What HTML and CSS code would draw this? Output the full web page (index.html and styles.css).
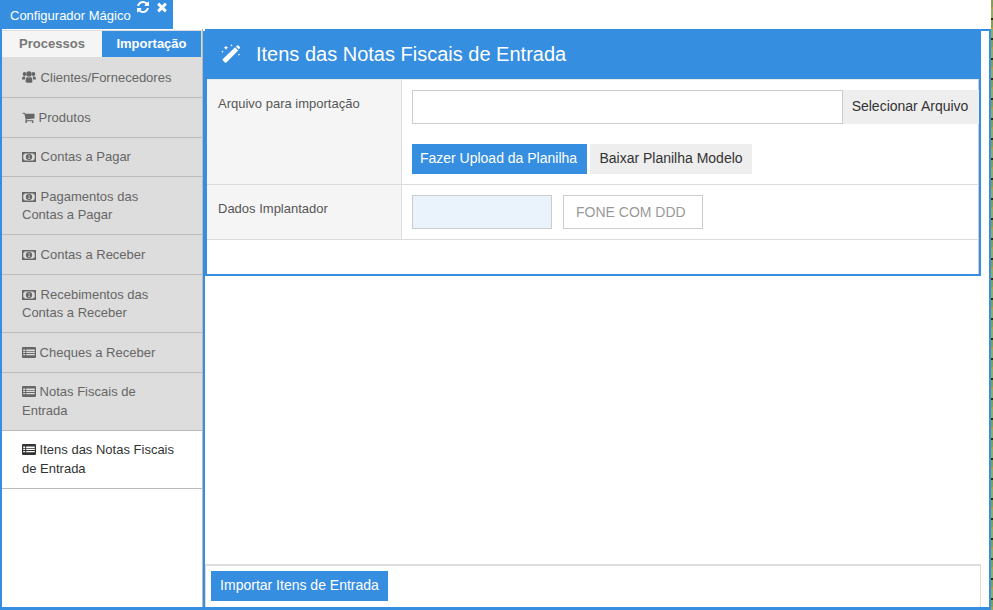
FILE: index.html
```html
<!DOCTYPE html>
<html lang="pt">
<head>
<meta charset="utf-8">
<title>Configurador Mágico</title>
<link rel="stylesheet" href="styles.css">
</head>
<body>
<svg class="defs" width="0" height="0" aria-hidden="true">
  <symbol id="i-refresh" viewBox="0 0 1792 1792"><path d="M1639 1056q0 5-1 7-64 268-268 434.5t-478 166.5q-146 0-282.5-55t-243.5-157l-129 129q-19 19-45 19t-45-19-19-45v-448q0-26 19-45t45-19h448q26 0 45 19t19 45-19 45l-137 137q71 66 161 102t187 36q134 0 250-65t186-179q11-17 53-117 8-23 30-23h192q13 0 22.5 9.5t9.5 22.5zm25-800v448q0 26-19 45t-45 19h-448q-26 0-45-19t-19-45 19-45l138-138q-148-137-349-137-134 0-250 65t-186 179q-11 17-53 117-8 23-30 23h-199q-13 0-22.5-9.5t-9.5-22.5v-7q65-268 270-434.5t480-166.5q146 0 284 55.5t245 156.5l130-129q19-19 45-19t45 19 19 45z"/></symbol>
  <symbol id="i-times" viewBox="0 0 1792 1792"><path d="M1490 1322q0 40-28 68l-136 136q-28 28-68 28t-68-28l-294-294-294 294q-28 28-68 28t-68-28l-136-136q-28-28-28-68t28-68l294-294-294-294q-28-28-28-68t28-68l136-136q28-28 68-28t68 28l294 294 294-294q28-28 68-28t68 28l136 136q28 28 28 68t-28 68l-294 294 294 294q28 28 28 68z"/></symbol>
  <symbol id="i-cart" viewBox="0 0 1792 1792"><path d="M704 1536q0 52-38 90t-90 38-90-38-38-90 38-90 90-38 90 38 38 90zm896 0q0 52-38 90t-90 38-90-38-38-90 38-90 90-38 90 38 38 90zm128-1088v512q0 24-16.5 42.5t-40.5 21.5l-1044 122q13 60 13 70 0 16-24 64h920q26 0 45 19t19 45-19 45-45 19h-1024q-26 0-45-19t-19-45q0-11 8-31.5t16-36 21.5-40 15.5-29.5l-177-823h-204q-26 0-45-19t-19-45 19-45 45-19h256q16 0 28.5 6.5t19.5 15.5 13 24.5 8 26 5.5 29.5 4.5 26h1201q26 0 45 19t19 45z"/></symbol>
  <symbol id="i-users" viewBox="0 0 14 12"><circle cx="2.6" cy="3" r="1.9"/><circle cx="11.4" cy="3" r="1.9"/><circle cx="7" cy="3" r="2.7"/><path d="M0 8.3C0 6.4.6 5.4 1.6 5.4h1.6L3 8.6H.9C.3 8.6 0 8.6 0 8.3zM14 8.3c0-1.9-.6-2.9-1.6-2.9h-1.6l.2 3.2h2.1c.6 0 .9 0 .9-.3z"/><path d="M3.6 10.6c0-3 .7-4.6 1.9-4.6.5.4 1 .6 1.5.6s1-.2 1.5-.6c1.2 0 1.9 1.6 1.9 4.6 0 .8-.6 1.2-1.3 1.2H4.9c-.7 0-1.3-.4-1.3-1.2z"/></symbol>
  <symbol id="i-money" viewBox="0 0 14 10"><path fill-rule="evenodd" d="M0 0h14v10H0zM2.6 1.4A1.4 1.4 0 0 1 1.3 2.7v4.6a1.4 1.4 0 0 1 1.3 1.3h8.8a1.4 1.4 0 0 1 1.3-1.3V2.7a1.4 1.4 0 0 1-1.3-1.3zM7 2a3.1 3.1 0 0 1 3.2 3A3.1 3.1 0 0 1 7 8a3.1 3.1 0 0 1-3.2-3A3.1 3.1 0 0 1 7 2zM6.4 3.2v.7h.4v2.3h-.6V7h1.7v-.8h-.5V3.2z"/></symbol>
  <symbol id="i-table" viewBox="0 0 14 11"><path fill-rule="evenodd" d="M1 0h12a1 1 0 0 1 1 1v9a1 1 0 0 1-1 1H1a1 1 0 0 1-1-1V1a1 1 0 0 1 1-1zM1.2 2.6v1.3h2V2.6zm3 0v1.3h8.6V2.6zM1.2 4.8v1.3h2V4.8zm3 0v1.3h8.6V4.8zM1.2 7v1.3h2V7zm3 0v1.3h8.6V7z"/></symbol>
  <symbol id="i-magic" viewBox="0 0 20 20"><path d="M15 2.4l1-.9a1 1 0 0 1 1.4 0l1.4 1.4a1 1 0 0 1 0 1.4l-1 1zM14.1 3.3l3.1 3.1L5.4 18.6a1 1 0 0 1-1.4 0L1.9 16.5a1 1 0 0 1 0-1.4z"/><path d="M5 1.5l.7 1.6 1.6.7-1.6.7L5 6.1l-.7-1.6-1.6-.7 1.6-.7zM10.5 0l.4.9.9.4-.9.4-.4.9-.4-.9-.9-.4.9-.4zM1.5 6.5l.4.8.8.4-.8.4-.4.8-.4-.8-.8-.4.8-.4zM18 9.5l.4.8.8.4-.8.4-.4.8-.4-.8-.8-.4.8-.4z"/></symbol>
</svg>
<div class="page">
  <div class="app">
    <div class="topbar">
      <div class="app-tab">
        <span class="app-tab-title">Configurador Mágico</span>
        <svg class="tab-icon"><use href="#i-refresh"/></svg>
        <svg class="tab-icon"><use href="#i-times"/></svg>
      </div>
    </div>
    <div class="window">
      <aside class="sidebar">
        <div class="tabs">
          <div class="tab">Processos</div>
          <div class="tab tab-active">Importação</div>
        </div>
        <ul class="menu">
          <li class="item h40"><svg class="ico ico-users"><use href="#i-users"/></svg> Clientes/Fornecedores</li>
          <li class="item h40"><svg class="ico ico-cart"><use href="#i-cart"/></svg> Produtos</li>
          <li class="item h39"><svg class="ico ico-money"><use href="#i-money"/></svg> Contas a Pagar</li>
          <li class="item h58 tight"><svg class="ico ico-money"><use href="#i-money"/></svg> Pagamentos das<br>Contas a Pagar</li>
          <li class="item h40"><svg class="ico ico-money"><use href="#i-money"/></svg> Contas a Receber</li>
          <li class="item h58 tight"><svg class="ico ico-money"><use href="#i-money"/></svg> Recebimentos das<br>Contas a Receber</li>
          <li class="item h40"><svg class="ico ico-table"><use href="#i-table"/></svg> Cheques a Receber</li>
          <li class="item h58 raised"><svg class="ico ico-table"><use href="#i-table"/></svg> Notas Fiscais de<br>Entrada</li>
          <li class="item h58 raised item-active"><svg class="ico ico-table"><use href="#i-table"/></svg> Itens das Notas Fiscais<br>de Entrada</li>
        </ul>
      </aside>
      <main class="main">
        <section class="panel">
          <header class="panel-head">
            <svg class="magic"><use href="#i-magic"/></svg>
            <h1 class="panel-title">Itens das Notas Fiscais de Entrada</h1>
          </header>
          <div class="row row-file">
            <div class="label">Arquivo para importação</div>
            <div class="field">
              <div class="file-line">
                <div class="input file-input"></div>
                <button class="btn btn-gray btn-select">Selecionar Arquivo</button>
              </div>
              <div class="actions">
                <button class="btn btn-blue btn-upload">Fazer Upload da Planilha</button>
                <button class="btn btn-gray btn-model">Baixar Planilha Modelo</button>
              </div>
            </div>
          </div>
          <div class="row row-data">
            <div class="label">Dados Implantador</div>
            <div class="field field-inline">
              <div class="input small-input filled"></div>
              <div class="input small-input placeholder">FONE COM DDD</div>
            </div>
          </div>
          <div class="panel-rest"></div>
        </section>
        <footer class="footer">
          <button class="btn btn-blue btn-import">Importar Itens de Entrada</button>
        </footer>
      </main>
    </div>
  </div>
  <div class="strip"></div>
</div>
</body>
</html>
```

FILE: styles.css
```css
* { box-sizing: border-box; }
html, body { margin: 0; height: 100%; overflow: hidden; background: #fff; }
body { font-family: "Liberation Sans", Arial, sans-serif; font-size: 13px; color: #666; }
.defs { position: absolute; }
.page { display: flex; width: 993px; height: 610px; }
.app { width: 991px; display: flex; flex-direction: column; }
.strip {
  width: 2px;
  background: repeating-linear-gradient(to bottom, #7f9f5a 0, #7f9f5a 7px, #c49a2c 7px, #c49a2c 9px, #8fae6a 9px, #8fae6a 18px, #3a2408 18px, #3a2408 20px);
}
.topbar { height: 29px; flex: none; }
.app-tab {
  width: 173px; height: 29px; background: #368ee0; color: #fff;
  display: flex; align-items: flex-start; padding-left: 10px;
}
.app-tab-title { font-size: 13px; line-height: 29px; margin-top: 1px; }
.tab-icon { width: 14px; height: 14px; fill: #fff; margin-left: 5px; }

.window {
  flex: 1; min-height: 0; display: flex;
  border-left: 2px solid #368ee0; border-right: 2px solid #368ee0; border-bottom: 3px solid #368ee0;
}
.sidebar { width: 201px; flex: none; border-right: 1px solid #bbb; padding-top: 1px; }
.tabs { display: flex; height: 28px; border: 1px solid #ddd; border-width: 1px 1px 1px 0; background: #f5f5f5; }
.tab { width: 100px; font-weight: bold; line-height: 25px; text-align: center; color: #777; }
.tab-active { background: #368ee0; color: #fff; width: 99px; }
.menu { list-style: none; margin: 0; padding: 0; }
.item {
  background: #ddd; border-bottom: 1px solid #bbb; line-height: 18.5px;
  padding: 11px 10px 0 20px; color: #666; white-space: nowrap;
}
.h40 { height: 40px; }
.h39 { height: 39px; padding-top: 10px; }
.h58 { height: 58px; }
.tight { line-height: 18px; }
.raised { line-height: 19px; padding-top: 9px; }
.item-active { background: #fff; color: #333; }
.ico { fill: currentColor; vertical-align: -1px; }
.ico-users { width: 14px; height: 12px; margin-right: 1px; }
.ico-cart { width: 13px; height: 13px; vertical-align: -2px; }
.ico-money { width: 14px; height: 10px; margin-right: 1px; }
.ico-table { width: 14px; height: 11px; }

.main { position: relative; flex: 1; min-width: 0; display: flex; flex-direction: column; border-left: 2px solid #368ee0; margin-top: 2px; }
.main::before { content: ""; position: absolute; top: -2px; left: 0; right: 0; height: 2px; background: #368ee0; }
.panel { width: 776px; height: 245px; border: 2px solid #368ee0; border-top: 0; background: #fff; display: flex; flex-direction: column; }
.panel-head { height: 48px; background: #368ee0; display: flex; align-items: center; padding: 0 0 2px 14px; flex: none; }
.magic { width: 20px; height: 20px; fill: #fff; }
.panel-title { margin: 0 0 0 15px; font-size: 20px; font-weight: normal; color: #fff; }
.row { display: flex; border-bottom: 1px solid #ddd; border-right: 1px solid #ccc; flex: none; }
.row-file { height: 106px; border-top: 1px solid #e8e8e8; }
.row-data { height: 55px; }
.label { width: 195px; background: #f5f5f5; border-right: 1px solid #ddd; padding: 15px 0 0 11px; line-height: 17px; color: #555; flex: none; }
.field { flex: 1; padding: 10px 0 0 10px; }
.field-inline { display: flex; gap: 11px; }
.file-line { display: flex; }
.input { height: 34px; border: 1px solid #ccc; background: #fff; }
.file-input { width: 431px; }
.small-input { width: 140px; }
.filled { background: #eaf2fb; }
.placeholder { color: #999; font-size: 14px; line-height: 32px; padding-left: 12px; }
.btn { border: 0; margin: 0; font: 14px "Liberation Sans", Arial, sans-serif; text-align: center; display: block; padding: 0 2px 2px 0; }
.btn-blue { background: #368ee0; color: #fff; }
.btn-gray { background: #eee; color: #333; }
.btn-select { width: 136px; height: 34px; }
.actions { display: flex; gap: 3px; margin-top: 20px; }
.btn-upload { width: 175px; height: 30px; }
.btn-model { width: 162px; height: 30px; padding-right: 0; }
.panel-rest { flex: 1; border-right: 1px solid #ccc; }

.footer { margin-top: auto; width: 776px; height: 43px; border: 1px solid #ddd; border-top-width: 2px; border-bottom: 0; padding: 5px 0 0 5px; }
.btn-import { width: 177px; height: 30px; padding-right: 0; }
```
